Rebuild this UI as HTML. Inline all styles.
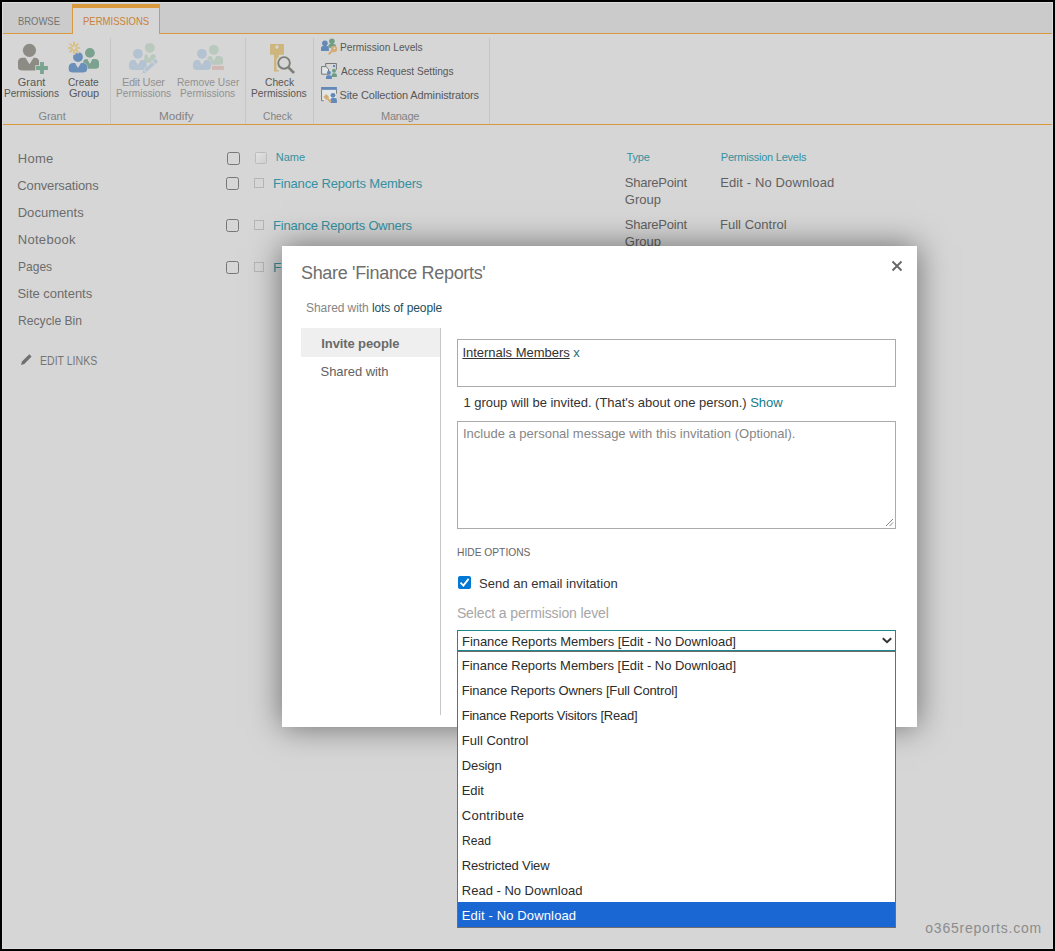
<!DOCTYPE html>
<html><head><meta charset="utf-8">
<style>
html,body{margin:0;padding:0}
body{width:1055px;height:951px;overflow:hidden;position:relative;background:#d6d6d6;font-family:"Liberation Sans",sans-serif}
.a{position:absolute}
.t{position:absolute;line-height:1;white-space:nowrap;font-family:"Liberation Sans",sans-serif}
</style></head><body>
<!-- tab row -->
<div class="a" style="left:0;top:0;width:1055px;height:33px;background:#cbcbcb"></div>
<div class="a" style="left:0;top:33px;width:1055px;height:1px;background:#d99a3e"></div>
<!-- permissions tab -->
<div class="a" style="left:72px;top:4px;width:88px;height:30px;background:#d6d6d6"></div>
<div class="a" style="left:72px;top:4px;width:88px;height:4px;background:#d99a3e"></div>
<div class="a" style="left:72px;top:4px;width:1px;height:30px;background:#d99a3e"></div>
<div class="a" style="left:159px;top:4px;width:1px;height:30px;background:#d99a3e"></div>
<!-- ribbon bottom line -->
<div class="a" style="left:0;top:124px;width:1055px;height:1px;background:#d99a3e"></div>
<!-- separators -->
<div class="a" style="left:110px;top:38px;width:1px;height:86px;background:#c6c6c6"></div>
<div class="a" style="left:245px;top:38px;width:1px;height:86px;background:#c6c6c6"></div>
<div class="a" style="left:313px;top:38px;width:1px;height:86px;background:#c6c6c6"></div>
<div class="a" style="left:489px;top:38px;width:1px;height:86px;background:#c6c6c6"></div>
<!-- ribbon icons -->
<svg class="a" style="left:0;top:0" width="500" height="125" viewBox="0 0 500 125">
  <!-- grant -->
  <circle cx="29.45" cy="50.3" r="6.6" fill="#8c8c84"/>
  <path d="M18,67.5 L18,62.3 Q18,57.8 22.5,57.8 L25.4,57.8 L29.5,64.2 L33.6,57.8 L34.7,57.8 Q39.2,57.8 39.2,62.3 L39.2,67.5 Q39.2,70.5 34.7,70.5 L22.5,70.5 Q18,70.5 18,67.5 Z" fill="#8c8c84"/>
  <path d="M40.1,62.1 h3.8 v4 h4 v3.8 h-4 v4 h-3.8 v-4 h-4 v-3.8 h4 Z" fill="#79a48f" stroke="#d6d6d6" stroke-width="1.6" paint-order="stroke"/>
  <!-- create group -->
  <circle cx="89.9" cy="52.9" r="4.9" fill="#7aa28e"/>
  <path d="M83,66.3 L83,62.9 Q83,58.9 87,58.9 L87.3,58.9 L89.9,64 L92.5,58.9 L95,58.9 Q99,58.9 99,62.9 L99,66.3 Q99,68.8 95.25,68.8 L86.75,68.8 Q83,68.8 83,66.3 Z" fill="#7aa28e"/>
  <circle cx="78" cy="57" r="4.9" fill="#6a8fb8"/>
  <path d="M68.7,69.6 L68.7,67.6 Q68.7,63.1 73.2,63.1 L75,63.1 L78,68 L81,63.1 L82.6,63.1 Q87.1,63.1 87.1,67.6 L87.1,69.6 Q87.1,72.6 82.6,72.6 L73.2,72.6 Q68.7,72.6 68.7,69.6 Z" fill="#6a8fb8" stroke="#d6d6d6" stroke-width="1" paint-order="stroke"/>
  <g stroke="#d6d6d6" stroke-width="3.2" stroke-linecap="round">
    <line x1="68.5" y1="47.95" x2="71.8" y2="47.95"/><line x1="76.2" y1="47.95" x2="79.5" y2="47.95"/>
    <line x1="74" y1="42.4" x2="74" y2="45.7"/><line x1="74" y1="50.2" x2="74" y2="53.5"/>
    <line x1="70.1" y1="44" x2="72.4" y2="46.3"/><line x1="75.6" y1="49.6" x2="77.9" y2="51.9"/>
    <line x1="77.9" y1="44" x2="75.6" y2="46.3"/><line x1="72.4" y1="49.6" x2="70.1" y2="51.9"/>
  </g>
  <g stroke="#d8bc78" stroke-width="1.6" stroke-linecap="round">
    <line x1="68.5" y1="47.95" x2="71.8" y2="47.95"/><line x1="76.2" y1="47.95" x2="79.5" y2="47.95"/>
    <line x1="74" y1="42.4" x2="74" y2="45.7"/><line x1="74" y1="50.2" x2="74" y2="53.5"/>
    <line x1="70.1" y1="44" x2="72.4" y2="46.3"/><line x1="75.6" y1="49.6" x2="77.9" y2="51.9"/>
    <line x1="77.9" y1="44" x2="75.6" y2="46.3"/><line x1="72.4" y1="49.6" x2="70.1" y2="51.9"/>
  </g>
  <!-- edit user perms -->
  <circle cx="149.8" cy="47.8" r="4.9" fill="#b9c9bd"/>
  <path d="M144.3,62 L144.3,57 Q144.5,54.2 146.5,54.2 L147,54.2 L149,59 L151.5,54.2 L153,54.2 Q156,54.5 156,57 L150,63 Z" fill="#b9c9bd"/>
  <circle cx="137.9" cy="53.8" r="4.9" fill="#b4c3d1"/>
  <path d="M129,66.9 L129,64.5 Q129,60 133.5,60 L135.0,60 L137.9,65 L140.8,60 L142.3,60 Q146.8,60 146.8,64.5 L146.8,66.9 Q146.8,69.9 142.3,69.9 L133.5,69.9 Q129,69.9 129,66.9 Z" fill="#b4c3d1"/>
  <g transform="rotate(-43 151 65.5)">
    <path d="M139.5,65.5 L142.5,63.5 L142.5,67.5 Z" fill="#b4c3d1"/>
    <rect x="143.3" y="63.5" width="11.2" height="4" fill="#b4c3d1" stroke="#d6d6d6" stroke-width="0.7"/>
    <rect x="155.4" y="63.5" width="3.2" height="4" fill="#b4c3d1"/>
  </g>
  <!-- remove user perms -->
  <circle cx="213.8" cy="49.8" r="4.9" fill="#b9c9bd"/>
  <path d="M207,62.3 L207,60.1 Q207,56.1 211,56.1 L211.3,56.1 L213.8,61 L216.3,56.1 L219.1,56.1 Q223.1,56.1 223.1,60.1 L223.1,62.3 Q223.1,64.8 219.35,64.8 L210.75,64.8 Q207,64.8 207,62.3 Z" fill="#b9c9bd"/>
  <circle cx="201.9" cy="53.8" r="4.9" fill="#b4c3d1"/>
  <path d="M193,66.9 L193,64.5 Q193,60 197.5,60 L199.0,60 L201.9,65 L204.8,60 L206.5,60 Q211,60 211,64.5 L211,66.9 Q211,69.9 206.5,69.9 L197.5,69.9 Q193,69.9 193,66.9 Z" fill="#b4c3d1" stroke="#d6d6d6" stroke-width="1" paint-order="stroke"/>
  <rect x="212" y="65.9" width="11.9" height="4" fill="#d1b9b3"/>
  <!-- check perms -->
  <path d="M270.6,44 L283.4,44 L283.9,44.6 L283.9,54.2 L283.4,54.8 L278.8,54.8 L278.8,57 L276.5,59 L276.5,70 L278.8,70 L278.8,71.4 L274,71.4 L274,54.8 L270.6,54.8 L270.1,54.2 L270.1,44.6 Z" fill="#cdb57c"/>
  <circle cx="276.9" cy="47" r="1.8" fill="#d6d6d6"/>
  <circle cx="284.06" cy="62.9" r="6.9" fill="none" stroke="#d6d6d6" stroke-width="1"/>
  <circle cx="284.06" cy="62.9" r="5.8" fill="#d6d6d6" stroke="#7c7f78" stroke-width="1.9"/>
  <line x1="288.4" y1="67.4" x2="294" y2="73" stroke="#7c7f78" stroke-width="2.6"/>
  <!-- permission levels 16 -->
  <circle cx="331.9" cy="41.2" r="2.8" fill="#6f9e88"/>
  <path d="M328.4,47.8 L328.4,45.5 Q328.6,43.9 330,43.9 L333.8,43.9 Q336,43.9 336,45.5 L336,47.8 Z" fill="#6f9e88"/>
  <circle cx="324.9" cy="43.2" r="2.8" fill="#6389b8"/>
  <path d="M321,50.9 L321,48 Q321,46 323,46 L327,46 Q328.9,46 328.9,48 L328.9,50.9 Z" fill="#6389b8"/>
  <circle cx="334" cy="49" r="3.2" fill="#d4ac78"/>
  <line x1="332.5" y1="50.5" x2="328.6" y2="54.2" stroke="#d4ac78" stroke-width="2"/>
  <circle cx="334.5" cy="48.3" r="0.8" fill="#e8e8e8"/>
  <!-- access request 16 -->
  <path d="M325.7,66 L325.7,63.5 L336.4,63.5 L336.4,69.7" fill="none" stroke="#777" stroke-width="1"/>
  <path d="M321.6,74.2 L321.6,66.6 L326,66.6 L328.5,69 L328.5,74.2 Z" fill="#e3e6e6" stroke="#777" stroke-width="1"/>
  <rect x="333" y="65" width="2" height="2" fill="#6389b8"/>
  <circle cx="334" cy="70.8" r="2" fill="#6f9e88"/>
  <path d="M331.7,76.9 L331.7,75 Q331.7,73.2 333.5,73.2 L335,73.2 Q336.9,73.2 336.9,75 L336.9,76.9 Z" fill="#6f9e88"/>
  <circle cx="328.9" cy="72.7" r="2" fill="#6389b8"/>
  <path d="M326,78.9 L326,77 Q326,75.3 328,75.3 L330,75.3 Q331.9,75.3 331.9,77 L331.9,78.9 Z" fill="#6389b8"/>
  <!-- site collection admins 16 -->
  <rect x="321.1" y="87" width="15.8" height="2.9" fill="#6389b8"/>
  <path d="M321.6,89.9 L321.6,100.7 L323.8,100.7 M336.4,89.9 L336.4,93.7" fill="none" stroke="#777" stroke-width="1"/>
  <rect x="322.2" y="89.9" width="13.7" height="10.3" fill="#e3e6e6"/>
  <circle cx="333" cy="95.3" r="2.4" fill="#6389b8"/>
  <path d="M330.5,102.9 L330.5,100 Q330.5,98.1 332.5,98.1 L335,98.1 Q336.9,98.1 336.9,100 L336.9,102.9 Z" fill="#6389b8"/>
  <path d="M323.3,97 L326.2,94.1 L329.1,97 L326.2,99.9 Z" fill="#d4ac78"/>
  <line x1="327.5" y1="98.5" x2="331" y2="102.3" stroke="#d4ac78" stroke-width="2"/>
</svg>
<!-- left nav pencil -->
<svg class="a" style="left:18px;top:352px" width="16" height="16" viewBox="18 352 16 16">
  <path d="M21,365 L22,361.6 L29.3,354.3 L31.6,356.6 L24.3,363.9 Z" fill="#6f6f6f"/>
</svg>
<!-- list checkboxes -->
<div class="a" style="left:227px;top:152px;width:11px;height:11px;border:1px solid #777;border-radius:2.5px"></div>
<div class="a" style="left:255px;top:152px;width:10px;height:10px;border:1px solid #bcbcbc;border-radius:1.5px;background:linear-gradient(135deg,#e2e2e2,#cfcfcf)"></div>
<div class="a" style="left:226px;top:177px;width:11px;height:11px;border:1px solid #777;border-radius:2.5px"></div>
<div class="a" style="left:254px;top:178px;width:8px;height:8px;border:1px solid #b5b5b5"></div>
<div class="a" style="left:226px;top:219px;width:11px;height:11px;border:1px solid #777;border-radius:2.5px"></div>
<div class="a" style="left:254px;top:220px;width:8px;height:8px;border:1px solid #b5b5b5"></div>
<div class="a" style="left:226px;top:261px;width:11px;height:11px;border:1px solid #777;border-radius:2.5px"></div>
<div class="a" style="left:254px;top:262px;width:8px;height:8px;border:1px solid #b5b5b5"></div>
<div class='t' style='left:17.64px;top:16px;font-size:11px;font-weight:400;color:#737373;letter-spacing:0.000px;transform:scaleX(0.8574);transform-origin:0 0;'>BROWSE</div>
<div class='t' style='left:83.13px;top:16px;font-size:11px;font-weight:400;color:#c98236;letter-spacing:0.000px;transform:scaleX(0.8667);transform-origin:0 0;'>PERMISSIONS</div>
<div class='t' style='left:17.80px;top:77px;font-size:11px;font-weight:400;color:#585858;letter-spacing:-0.000px;'>Grant</div>
<div class='t' style='left:3.78px;top:88px;font-size:11px;font-weight:400;color:#585858;letter-spacing:0.000px;transform:scaleX(0.9186);transform-origin:0 0;'>Permissions</div>
<div class='t' style='left:68.37px;top:77px;font-size:11px;font-weight:400;color:#585858;letter-spacing:0.000px;transform:scaleX(0.9281);transform-origin:0 0;'>Create</div>
<div class='t' style='left:68.90px;top:88px;font-size:11px;font-weight:400;color:#585858;letter-spacing:-0.100px;'>Group</div>
<div class='t' style='left:38.40px;top:111px;font-size:11px;font-weight:400;color:#838383;letter-spacing:-0.050px;'>Grant</div>
<div class='t' style='left:121.90px;top:77px;font-size:11px;font-weight:400;color:#929292;letter-spacing:-0.262px;'>Edit User</div>
<div class='t' style='left:115.78px;top:88px;font-size:11px;font-weight:400;color:#929292;letter-spacing:0.000px;transform:scaleX(0.9203);transform-origin:0 0;'>Permissions</div>
<div class='t' style='left:176.87px;top:77px;font-size:11px;font-weight:400;color:#929292;letter-spacing:0.000px;transform:scaleX(0.9273);transform-origin:0 0;'>Remove User</div>
<div class='t' style='left:180.08px;top:88px;font-size:11px;font-weight:400;color:#929292;letter-spacing:0.000px;transform:scaleX(0.9203);transform-origin:0 0;'>Permissions</div>
<div class='t' style='left:158.94px;top:111px;font-size:11px;font-weight:400;color:#838383;letter-spacing:0.000px;transform:scaleX(1.0645);transform-origin:0 0;'>Modify</div>
<div class='t' style='left:265.07px;top:77px;font-size:11px;font-weight:400;color:#585858;letter-spacing:0.000px;transform:scaleX(0.9333);transform-origin:0 0;'>Check</div>
<div class='t' style='left:251.37px;top:88px;font-size:11px;font-weight:400;color:#585858;letter-spacing:0.000px;transform:scaleX(0.9305);transform-origin:0 0;'>Permissions</div>
<div class='t' style='left:263.07px;top:111px;font-size:11px;font-weight:400;color:#838383;letter-spacing:0.000px;transform:scaleX(0.9333);transform-origin:0 0;'>Check</div>
<div class='t' style='left:339.57px;top:42px;font-size:11px;font-weight:400;color:#585858;letter-spacing:0.000px;transform:scaleX(0.9261);transform-origin:0 0;'>Permission Levels</div>
<div class='t' style='left:340.50px;top:66px;font-size:11px;font-weight:400;color:#585858;letter-spacing:0.000px;transform:scaleX(0.9205);transform-origin:0 0;'>Access Request Settings</div>
<div class='t' style='left:339.50px;top:90px;font-size:11px;font-weight:400;color:#585858;letter-spacing:-0.121px;'>Site Collection Administrators</div>
<div class='t' style='left:381.00px;top:111px;font-size:11px;font-weight:400;color:#838383;letter-spacing:-0.260px;'>Manage</div>
<div class='t' style='left:17.80px;top:152px;font-size:13px;font-weight:400;color:#6c6c6c;letter-spacing:0.233px;'>Home</div>
<div class='t' style='left:17.30px;top:179px;font-size:13px;font-weight:400;color:#6c6c6c;letter-spacing:-0.142px;'>Conversations</div>
<div class='t' style='left:17.70px;top:206px;font-size:13px;font-weight:400;color:#6c6c6c;letter-spacing:0.037px;'>Documents</div>
<div class='t' style='left:17.70px;top:233px;font-size:13px;font-weight:400;color:#6c6c6c;letter-spacing:0.314px;'>Notebook</div>
<div class='t' style='left:18.27px;top:260px;font-size:13px;font-weight:400;color:#6c6c6c;letter-spacing:0.000px;transform:scaleX(0.9257);transform-origin:0 0;'>Pages</div>
<div class='t' style='left:17.40px;top:287px;font-size:13px;font-weight:400;color:#6c6c6c;letter-spacing:-0.033px;'>Site contents</div>
<div class='t' style='left:17.57px;top:314px;font-size:13px;font-weight:400;color:#6c6c6c;letter-spacing:0.000px;transform:scaleX(0.9328);transform-origin:0 0;'>Recycle Bin</div>
<div class='t' style='left:39.62px;top:355px;font-size:12px;font-weight:400;color:#767676;letter-spacing:0.000px;transform:scaleX(0.8781);transform-origin:0 0;'>EDIT LINKS</div>
<div class='t' style='left:275.70px;top:152px;font-size:11px;font-weight:400;color:#35909f;letter-spacing:0.033px;'>Name</div>
<div class='t' style='left:626.40px;top:152px;font-size:11px;font-weight:400;color:#35909f;letter-spacing:-0.100px;'>Type</div>
<div class='t' style='left:720.80px;top:152px;font-size:11px;font-weight:400;color:#35909f;letter-spacing:-0.225px;'>Permission Levels</div>
<div class='t' style='left:273.00px;top:177px;font-size:13px;font-weight:400;color:#35909f;letter-spacing:-0.173px;'>Finance Reports Members</div>
<div class='t' style='left:273.00px;top:219px;font-size:13px;font-weight:400;color:#35909f;letter-spacing:-0.224px;'>Finance Reports Owners</div>
<div class='t' style='left:272.94px;top:261px;font-size:13px;font-weight:400;color:#35909f;letter-spacing:0.000px;transform:scaleX(1.0571);transform-origin:0 0;'>Finance Reports Visitors</div>
<div class='t' style='left:624.80px;top:176px;font-size:13px;font-weight:400;color:#616161;letter-spacing:-0.233px;'>SharePoint</div>
<div class='t' style='left:624.80px;top:193px;font-size:13px;font-weight:400;color:#616161;letter-spacing:0.000px;'>Group</div>
<div class='t' style='left:624.80px;top:218px;font-size:13px;font-weight:400;color:#616161;letter-spacing:-0.233px;'>SharePoint</div>
<div class='t' style='left:624.80px;top:235px;font-size:13px;font-weight:400;color:#616161;letter-spacing:0.000px;'>Group</div>
<div class='t' style='left:720.20px;top:176px;font-size:13px;font-weight:400;color:#616161;letter-spacing:0.124px;'>Edit - No Download</div>
<div class='t' style='left:720.00px;top:218px;font-size:13px;font-weight:400;color:#616161;letter-spacing:0.018px;'>Full Control</div>
<!-- dialog -->
<div class="a" style="left:282px;top:246px;width:635px;height:481px;background:#fff;box-shadow:0 0 30px rgba(0,0,0,0.5)"></div>
<!-- close x -->
<svg class="a" style="left:890px;top:259px" width="14" height="14" viewBox="890 259 14 14">
  <path d="M892.5,261.5 L901.5,270.5 M901.5,261.5 L892.5,270.5" stroke="#666" stroke-width="1.9"/>
</svg>
<div class="a" style="left:301px;top:328px;width:139px;height:29px;background:#efefef"></div>
<div class="a" style="left:440px;top:328px;width:1px;height:387px;background:#c6c6c6"></div>
<!-- people input -->
<div class="a" style="left:457px;top:339px;width:437px;height:46px;border:1px solid #ababab"></div>
<!-- textarea -->
<div class="a" style="left:457px;top:421px;width:437px;height:106px;border:1px solid #ababab"></div>
<svg class="a" style="left:884px;top:517px" width="10" height="10" viewBox="884 517 10 10">
  <path d="M886,526 L893,519 M889.5,526 L893,522.5" stroke="#777" stroke-width="0.9"/>
</svg>
<!-- email checkbox -->
<div class="a" style="left:458px;top:576px;width:13px;height:13px;background:#0078d4;border-radius:2px"></div>
<svg class="a" style="left:458px;top:576px" width="13" height="13" viewBox="458 576 13 13">
  <path d="M460.5,582.6 L463.4,585.6 L468.6,578.9" fill="none" stroke="#fff" stroke-width="1.9"/>
</svg>
<!-- select -->
<div class="a" style="left:457px;top:630px;width:437px;height:19px;border:1px solid #1a8a8c;background:#fff"></div>
<svg class="a" style="left:880px;top:634px" width="14" height="12" viewBox="880 634 14 12">
  <path d="M882.8,638.2 L887,642.2 L891.2,638.2" fill="none" stroke="#333" stroke-width="2"/>
</svg>
<!-- dropdown list -->
<div class="a" style="left:457px;top:651px;width:437px;height:275px;border:1px solid #6d6d6d;background:#fff"></div>
<div class="a" style="left:458px;top:902px;width:437px;height:25px;background:#1a67d4"></div>
<div class='t' style='left:301.00px;top:264px;font-size:18px;font-weight:400;color:#6e6e6e;letter-spacing:-0.327px;'>Share 'Finance Reports'</div>
<div class='t' style='left:306.10px;top:302px;font-size:12px;font-weight:400;color:#858585;letter-spacing:-0.076px;'>Shared with <span style='color:#1d4f5c'>lots of people</span></div>
<div class='t' style='left:321.30px;top:337px;font-size:13px;font-weight:700;color:#6a6a6a;letter-spacing:-0.108px;'>Invite people</div>
<div class='t' style='left:320.60px;top:365px;font-size:13px;font-weight:400;color:#626262;letter-spacing:-0.070px;'>Shared with</div>
<div class='t' style='left:462.40px;top:346px;font-size:13px;font-weight:400;color:#333;letter-spacing:-0.022px;'><span style='text-decoration:underline;text-underline-offset:1px'>Internals Members</span> <span style='color:#1f6f7c'>x</span></div>
<div class='t' style='left:463.40px;top:396px;font-size:13px;font-weight:400;color:#333;letter-spacing:-0.022px;'>1 group will be invited. (That's about one person.) <span style='color:#127c8a'>Show</span></div>
<div class='t' style='left:463.00px;top:427px;font-size:13px;font-weight:400;color:#868686;letter-spacing:0.000px;'>Include a personal message with this invitation (Optional).</div>
<div class='t' style='left:456.97px;top:547px;font-size:11px;font-weight:400;color:#666;letter-spacing:0.000px;transform:scaleX(0.9312);transform-origin:0 0;'>HIDE OPTIONS</div>
<div class='t' style='left:479.10px;top:577px;font-size:13px;font-weight:400;color:#333;letter-spacing:0.022px;'>Send an email invitation</div>
<div class='t' style='left:456.90px;top:606px;font-size:14px;font-weight:400;color:#a6a6a6;letter-spacing:-0.121px;'>Select a permission level</div>
<div class='t' style='left:462.00px;top:635px;font-size:13px;font-weight:400;color:#2c2c2c;letter-spacing:-0.047px;'>Finance Reports Members [Edit - No Download]</div>
<div class='t' style='left:461.80px;top:659px;font-size:13px;font-weight:400;color:#2c2c2c;letter-spacing:-0.042px;'>Finance Reports Members [Edit - No Download]</div>
<div class='t' style='left:461.80px;top:684px;font-size:13px;font-weight:400;color:#2c2c2c;letter-spacing:-0.144px;'>Finance Reports Owners [Full Control]</div>
<div class='t' style='left:461.80px;top:709px;font-size:13px;font-weight:400;color:#2c2c2c;letter-spacing:-0.253px;'>Finance Reports Visitors [Read]</div>
<div class='t' style='left:461.80px;top:734px;font-size:13px;font-weight:400;color:#2c2c2c;letter-spacing:0.018px;'>Full Control</div>
<div class='t' style='left:461.80px;top:759px;font-size:13px;font-weight:400;color:#2c2c2c;letter-spacing:-0.120px;'>Design</div>
<div class='t' style='left:461.80px;top:784px;font-size:13px;font-weight:400;color:#2c2c2c;letter-spacing:-0.100px;'>Edit</div>
<div class='t' style='left:461.80px;top:809px;font-size:13px;font-weight:400;color:#2c2c2c;letter-spacing:0.233px;'>Contribute</div>
<div class='t' style='left:461.87px;top:834px;font-size:13px;font-weight:400;color:#2c2c2c;letter-spacing:0.000px;transform:scaleX(0.9310);transform-origin:0 0;'>Read</div>
<div class='t' style='left:461.80px;top:859px;font-size:13px;font-weight:400;color:#2c2c2c;letter-spacing:-0.164px;'>Restricted View</div>
<div class='t' style='left:461.80px;top:884px;font-size:13px;font-weight:400;color:#2c2c2c;letter-spacing:-0.006px;'>Read - No Download</div>
<div class='t' style='left:461.80px;top:909px;font-size:13px;font-weight:400;color:#fff;letter-spacing:0.135px;'>Edit - No Download</div>
<div class='t' style='left:925.30px;top:921px;font-size:14px;font-weight:400;color:#8c8c8c;letter-spacing:0.771px;'>o365reports.com</div>
<!-- frame -->
<div class="a" style="left:2px;top:2px;width:1049px;height:945px;border:1px solid #dddddd"></div>
<div class="a" style="left:0;top:0;width:1051px;height:947px;border:2px solid #000"></div>
</body></html>
